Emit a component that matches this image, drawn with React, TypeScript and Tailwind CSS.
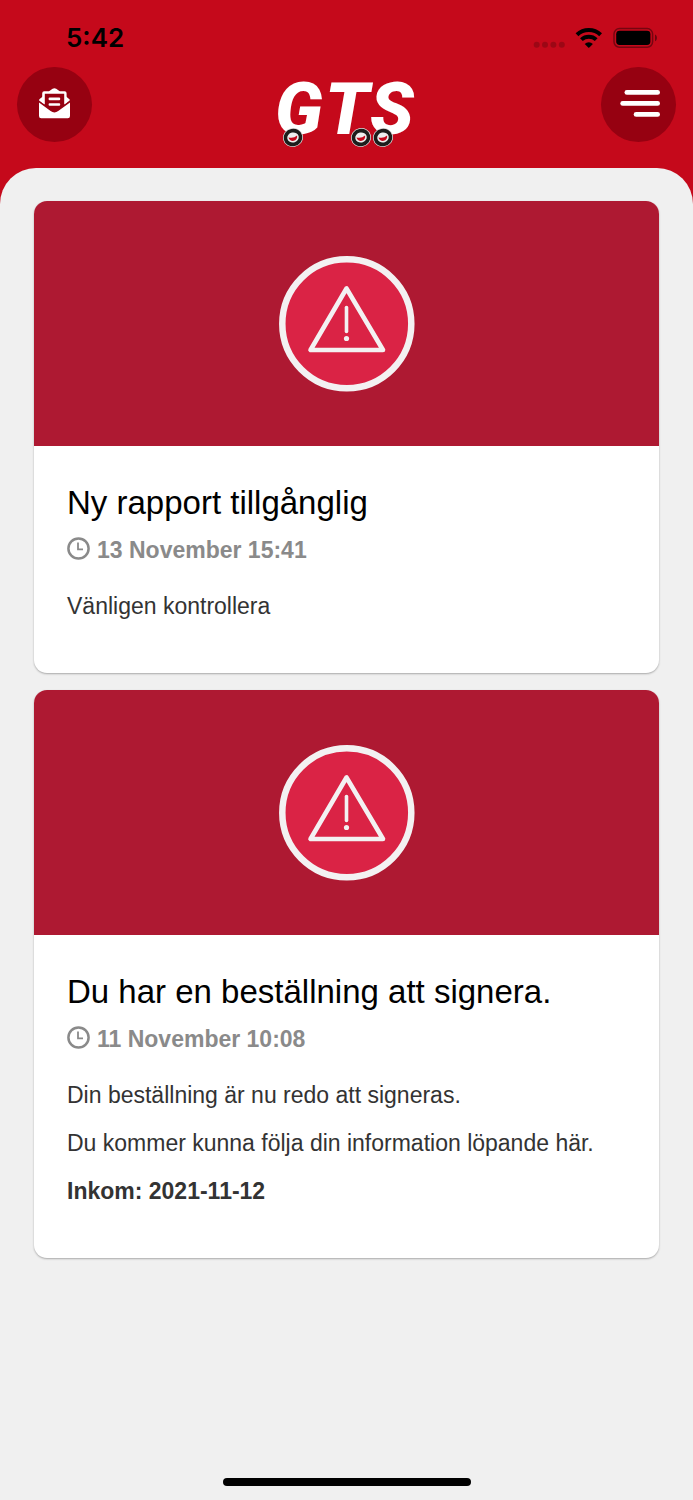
import type { ReactNode } from "react";

interface NewsItem {
  id: number;
  title: string;
  date: string;
  body: ReactNode[];
}

const items: NewsItem[] = [
  {
    id: 1,
    title: "Ny rapport tillgånglig",
    date: "13 November 15:41",
    body: ["Vänligen kontrollera"],
  },
  {
    id: 2,
    title: "Du har en beställning att signera.",
    date: "11 November 10:08",
    body: [
      "Din beställning är nu redo att signeras.",
      "Du kommer kunna följa din information löpande här.",
      <strong>Inkom: 2021-11-12</strong>,
    ],
  },
];

function StatusBar() {
  return (
    <div className="flex h-[67px] items-center justify-between pt-[9px] pr-9 pl-[66px]">
      <span className="font-['Inter',sans-serif] text-[26px] leading-8 font-semibold text-black">5:42</span>
      <svg className="h-6 w-[124px]" viewBox="533 26 124 24" aria-hidden="true">
        <g fill="#000" opacity="0.2">
          <circle cx="536.7" cy="44.7" r="3" />
          <circle cx="545" cy="44.7" r="3" />
          <circle cx="553.4" cy="44.7" r="3" />
          <circle cx="561.8" cy="44.7" r="3" />
        </g>
        <g fill="none" stroke="#000" strokeWidth="4">
          <path d="M577 34.8a17 17 0 0 1 23.6 0" />
          <path d="M581.4 39.6a10.8 10.8 0 0 1 14.8 0" />
        </g>
        <path d="M588.8 48l-4.1-4.1a6 6 0 0 1 8.2 0z" fill="#000" />
        <rect x="614" y="28.6" width="38.6" height="18.6" rx="5.4" fill="none" stroke="#000" strokeOpacity="0.4" strokeWidth="1.5" />
        <rect x="616.2" y="30.8" width="34.2" height="14.2" rx="3.4" fill="#000" />
        <path d="M655 34.6c2.6 1.2 2.6 5.4 0 6.6z" fill="#000" opacity="0.45" />
      </svg>
    </div>
  );
}

function EnvelopeIcon() {
  return (
    <svg className="mb-0.5 size-[31px]" viewBox="0 0 31 31" fill="#fff" aria-hidden="true">
      {/* sheet */}
      <path
        fillRule="evenodd"
        d="M3.2 14.8V5.2q0-2 2-2h4.6q1-.2 2-1.2l1.8-1.2q1.8-1.2 3.6 0l1.8 1.2q1 1 2 1.2h4.6q2 0 2 2v9.6l-2.4 1.6V5.8H5.8v10.6z"
      />
      {/* envelope shoulders */}
      <path d="M4.6 7.8v8L.4 12.8q-.6-.6 0-1.6z" />
      <path d="M26.2 7.800v8l4.200-3q.6-.6 0-1.600z" />
      <rect x="9.6" y="9.6" width="11.6" height="2.6" rx="1" />
      <rect x="9.6" y="15.2" width="11.6" height="2.6" rx="1" />
      <path d="M0 14.6L11.6 23q3.8 2.8 7.6 0L31 14.6V28q0 2.2-2.2 2.2H2.2Q0 30.2 0 28z" />
    </svg>
  );
}

function Wheel({ cx }: { cx: number }) {
  return (
    <g transform={`rotate(-12 ${cx} 70.5)`}>
      <ellipse cx={cx} cy="70.5" rx="10.2" ry="9.4" fill="#ddd" />
      <ellipse cx={cx} cy="70.5" rx="7.6" ry="6.8" fill="#eee" stroke="#1d1d1b" strokeWidth="3.6" />
      <path d={`M${cx - 4.4} 69.5q4.400 2.400 8.800 0a4.400 4.400 0 0 1-8.800 0z`} fill="#c4081b" />
    </g>
  );
}

function Logo() {
  return (
    <svg className="h-[85px] w-[144px]" viewBox="0 0 144 85" role="img" aria-label="GTS">
      <text
        x="0 50 95"
        y="67"
        fontFamily="Roboto, sans-serif"
        fontSize="72"
        fontStyle="italic"
        fontWeight="900"
        fill="#fff"
      >
        GTS
      </text>
      <Wheel cx={18} />
      <Wheel cx={86} />
      <Wheel cx={108} />
    </svg>
  );
}

function Header() {
  return (
    <header>
      <StatusBar />
      <nav className="flex items-start justify-between px-[17px] pb-4">
        <button
          type="button"
          aria-label="Meddelanden"
          className="flex size-[75px] items-center justify-center rounded-full bg-[#960111]"
        >
          <EnvelopeIcon />
        </button>
        <Logo />
        <button
          type="button"
          aria-label="Meny"
          className="flex size-[75px] items-center justify-end rounded-full bg-[#960111] pr-4"
        >
          <svg className="mb-0.5 h-[27px] w-10" viewBox="0 0 40 27" fill="#fff">
            <rect x="4.5" y="0" width="35.5" height="4.8" rx="2.4" />
            <rect x="0.3" y="11" width="39.7" height="4.8" rx="2.4" />
            <rect x="13.7" y="22" width="26.3" height="4.8" rx="2.4" />
          </svg>
        </button>
      </nav>
    </header>
  );
}

function WarningBanner() {
  return (
    <div className="flex h-[245px] items-center justify-center bg-[#ae1932]">
      <svg className="size-[136px]" viewBox="0 0 136 136" aria-hidden="true">
        <circle cx="67.8" cy="67.8" r="64.5" fill="#da2345" stroke="#f3f1f2" strokeWidth="6.5" />
        <path d="M67.5 32.5L31.5 94H104z" fill="none" stroke="#f3f1f2" strokeWidth="4.6" strokeLinejoin="round" />
        <path d="M67.5 51.5v24" stroke="#f3f1f2" strokeWidth="3.6" strokeLinecap="round" />
        <circle cx="67.5" cy="82.5" r="2.6" fill="#f3f1f2" />
      </svg>
    </div>
  );
}

function ClockIcon() {
  return (
    <svg className="mb-1 size-[23px]" viewBox="0 0 23 23" fill="none" stroke="#8a8a8a" aria-hidden="true">
      <circle cx="11.5" cy="11.5" r="10.1" strokeWidth="2.5" />
      <path d="M11 5.5v6.8h5" strokeWidth="1.8" />
    </svg>
  );
}

function NewsCard({ item }: { item: NewsItem }) {
  return (
    <article className="overflow-hidden rounded-[13px] bg-white shadow-[0_1px_2px_rgba(0,0,0,0.3)]">
      <WarningBanner />
      <div className="px-[33px] pt-[37px] pb-[51px]">
        <h2 className="text-[33px] leading-10 text-black">{item.title}</h2>
        <p className="mt-[11px] flex items-center gap-[7px] text-[23px] leading-8 font-bold text-[#8a8a8a]">
          <ClockIcon />
          <time>{item.date}</time>
        </p>
        <div className="mt-6 flex flex-col gap-4 text-[23px] leading-8 text-[#333]">
          {item.body.map((line, i) => (
            <p key={i}>{line}</p>
          ))}
        </div>
      </div>
    </article>
  );
}

export default function App() {
  return (
    <div className="flex min-h-screen flex-col bg-[#c5091b] font-['Liberation_Sans',Arial,sans-serif]">
      <Header />
      <main className="flex flex-1 flex-col rounded-t-[36px] bg-[#f0f0f0]">
        <div className="flex flex-col gap-[17px] px-[34px] pt-[33px]">
          {items.map((item) => (
            <NewsCard key={item.id} item={item} />
          ))}
        </div>
        <div className="mx-auto mt-auto mb-[14px] h-2 w-[248px] rounded-full bg-black" />
      </main>
    </div>
  );
}
